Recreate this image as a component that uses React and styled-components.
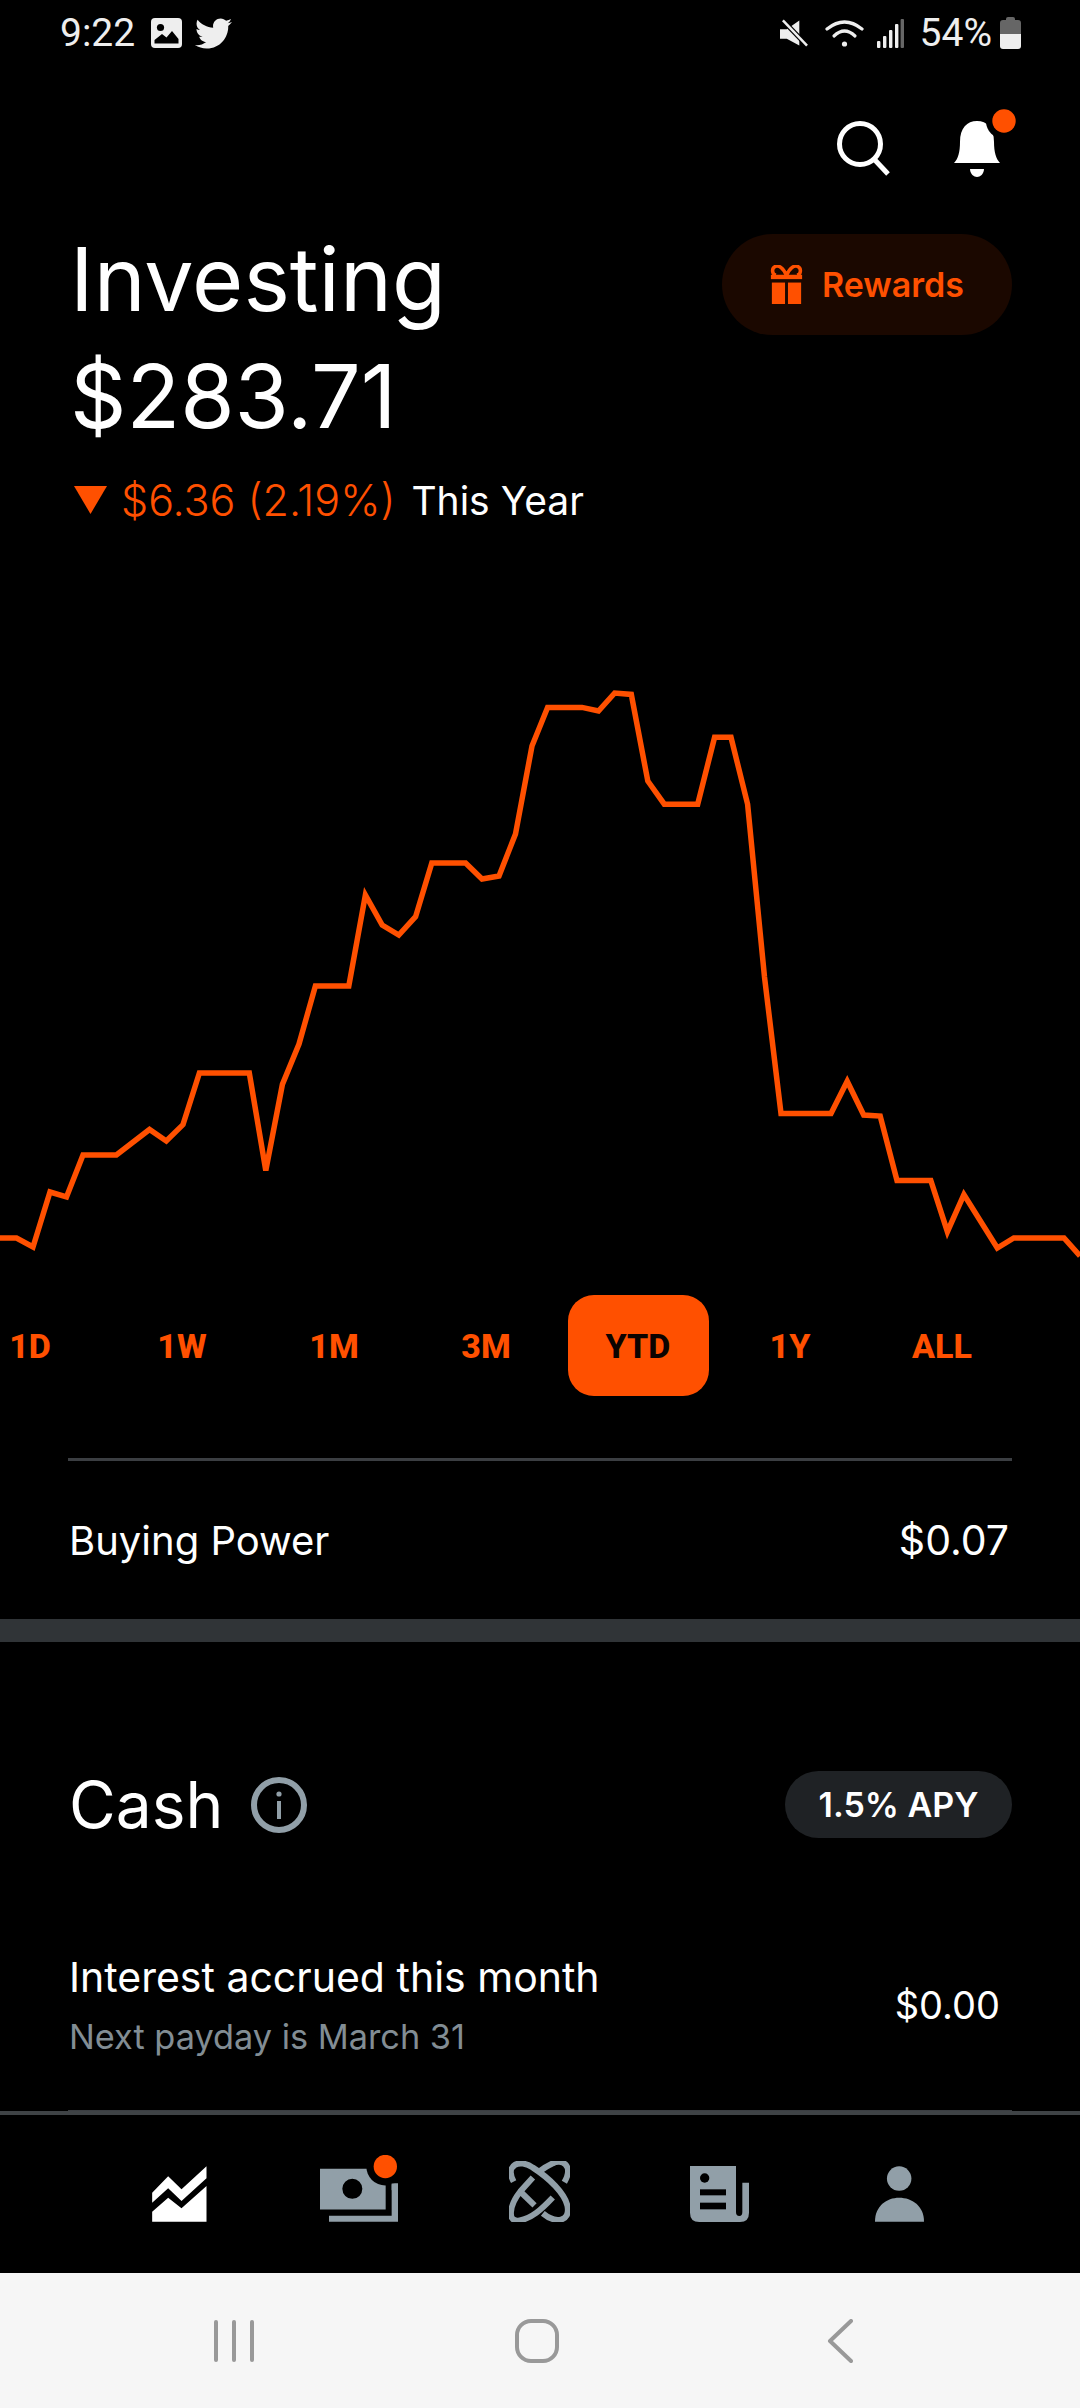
import React from 'react'
import styled, { createGlobalStyle } from 'styled-components'
import { FaTwitter } from 'react-icons/fa'

const ORANGE = '#ff5000'
const SLATE = '#919fa8'
const UI_FONT = '"Inter", "Liberation Sans", sans-serif'

const chartPoints = [
  [0, 1238], [16.5, 1238], [33, 1247], [50, 1192], [66.5, 1197], [83, 1155], [116.4, 1155],
  [149.5, 1129.5], [166.3, 1141], [183, 1124.6], [199.4, 1073], [249.3, 1073], [265.8, 1170.5],
  [282.4, 1084.4], [299, 1044], [315.4, 986], [348.8, 986], [365.4, 895], [382.2, 925],
  [398.8, 935], [415.6, 916.7], [431.8, 863], [465.6, 863], [482, 879], [499, 876], [515.5, 834],
  [532, 746], [547.6, 707.4], [582, 707.4], [598.5, 711], [614.7, 693], [631.3, 694.4],
  [647.8, 781], [664.3, 804.2], [697.7, 804.2], [714.6, 737.3], [731, 737.3], [747.6, 804.2],
  [764.5, 977], [781, 1113.4], [831, 1113.4], [847.2, 1081.3], [863.7, 1115], [880.2, 1116],
  [897, 1180.4], [930.8, 1180.4], [947.4, 1231.7], [963.9, 1194.6], [997.3, 1248], [1013.8, 1238],
  [1064, 1238], [1080, 1256],
]

const ranges = ['1D', '1W', '1M', '3M', 'YTD', '1Y', 'ALL']

const GlobalStyle = createGlobalStyle`
  html, body {
    margin: 0;
    padding: 0;
    background: #000;
  }
`

const Page = styled.div`
  width: 1080px;
  height: 2408px;
  display: flex;
  flex-direction: column;
  overflow: hidden;
  background: #000;
  color: #fff;
  font-family: ${UI_FONT};
`

const Main = styled.main`
  flex: 1;
  min-height: 0;
  overflow: hidden;
`

const StatusBar = styled.div`
  height: 66px;
  padding: 0 59px 0 60px;
  display: flex;
  align-items: center;
  justify-content: space-between;
  color: #eee;
  font-family: Roboto, sans-serif;
  font-size: 39px;
`

const StatusGroup = styled.div`
  display: flex;
  align-items: center;
`

const StatusItem = styled.span`
  display: flex;
  align-items: center;
  margin-right: ${p => p.$space || 0}px;
`

const Toolbar = styled.div`
  margin-top: 43px;
  padding-right: 63px;
  display: flex;
  justify-content: flex-end;
  align-items: flex-end;
  gap: 64px;
`

const SearchIcon = styled.svg`
  margin-bottom: 1px;
`

const Header = styled.header`
  margin-top: 44px;
  padding: 0 68px 0 70px;
  display: flex;
  justify-content: space-between;
  align-items: flex-start;
`

const Title = styled.h1`
  margin: 0;
  font-size: 88px;
  font-weight: 400;
  line-height: 117px;
`

const RewardsButton = styled.div`
  margin-top: 13px;
  width: 290px;
  height: 101px;
  border-radius: 51px;
  background: #1b0800;
  color: ${ORANGE};
  display: flex;
  align-items: center;
  justify-content: center;
  gap: 19px;
  font-size: 34px;
  font-weight: 600;
`

const Change = styled.div`
  margin-top: 20px;
  padding-left: 74px;
  display: flex;
  align-items: center;
  height: 50px;
  font-weight: 300;
`

const DownTriangle = styled.span`
  width: 33px;
  height: 28px;
  margin-right: 14px;
  background: ${ORANGE};
  clip-path: polygon(0 0, 100% 0, 50% 100%);
`

const ChangeValue = styled.span`
  color: ${ORANGE};
  margin-right: 16px;
  font-size: 43px;
`

const YearLabel = styled.span`
  font-size: 39px;
  font-weight: 400;
`

const ChartWrap = styled.div`
  margin-top: 155px;
  height: 580px;

  svg {
    display: block;
  }
`

const RangeTabs = styled.div`
  margin: 35px 0 0 -46px;
  display: flex;
  width: 1064px;
`

const RangeTab = styled.div`
  flex: 1;
  height: 101px;
  margin: 0 5.5px;
  border-radius: 26px;
  display: flex;
  align-items: center;
  justify-content: center;
  font-family: Roboto, sans-serif;
  font-size: 34px;
  font-weight: 800;
  background: ${p => (p.$active ? ORANGE : 'transparent')};
  color: ${p => (p.$active ? '#0c0300' : ORANGE)};
`

const Rule = styled.hr`
  margin: ${p => p.$top}px 68px 0;
  border: 0;
  height: ${p => p.$height}px;
  background: #3b3e42;
`

const BuyingRow = styled.div`
  height: 158px;
  padding: 0 71px 0 69px;
  display: flex;
  align-items: center;
  justify-content: space-between;
  font-size: 40px;
`

const BuyingValue = styled.span`
  font-size: 41px;
`

const Band = styled.div`
  height: 23px;
  background: #303437;
`

const CashHeader = styled.div`
  margin-top: 129px;
  height: 67px;
  padding: 0 68px 0 69px;
  display: flex;
  align-items: center;
  justify-content: space-between;
`

const CashTitle = styled.h2`
  margin: 0;
  display: flex;
  align-items: center;
  gap: 28px;
  font-size: 64px;
  font-weight: 400;
`

const ApyPill = styled.div`
  width: 227px;
  height: 67px;
  border-radius: 34px;
  background: #1f2225;
  display: flex;
  align-items: center;
  justify-content: center;
  font-size: 34px;
  font-weight: 600;
`

const InterestRow = styled.div`
  margin-top: 114px;
  padding: 0 80px 0 69px;
  display: flex;
  align-items: center;
  justify-content: space-between;
`

const InterestLabel = styled.div`
  font-size: 41px;
  line-height: 50px;
`

const InterestSub = styled.div`
  margin-top: 12px;
  color: #828d94;
  font-size: 34.3px;
  line-height: 46px;
`

const InterestValue = styled.div`
  margin-bottom: 2px;
  font-size: 38px;
`

const BottomNav = styled.nav`
  height: 162px;
  box-sizing: border-box;
  padding: 0 91px 51px 89px;
  border-top: 4px solid #3f4346;
  display: grid;
  grid-template-columns: repeat(5, 1fr);
  align-items: end;
  justify-items: center;
`

const SystemNav = styled.div`
  height: 135px;
  padding: 0 89px 0 82px;
  background: #f6f6f6;
  display: grid;
  grid-template-columns: repeat(3, 1fr);
  align-items: center;
  justify-items: center;
`

const MuteGlyph = () => (
  <svg width="28" height="28" viewBox="0 0 29 28">
    <path d="M0 10 H7 L20 1 V27 L7 20 H0Z" fill="#eee" />
    <path d="M2 0 L28 27" stroke="#000" strokeWidth="5" />
    <path d="M3 1 L28 27" stroke="#eee" strokeWidth="2.6" />
  </svg>
)

const WifiGlyph = () => (
  <svg width="39" height="28" viewBox="0 0 39 28" fill="none" stroke="#eee" strokeWidth="3.2" strokeLinecap="round">
    <path d="M2 10 Q19.5 -4 37 10" />
    <path d="M9 17 Q19.5 7 30 17" />
    <circle cx="19.5" cy="25" r="2.6" fill="#eee" stroke="none" />
  </svg>
)

const SignalGlyph = () => (
  <svg width="27" height="29" viewBox="0 0 27 29">
    <rect x="0" y="22" width="3.4" height="7" rx="1" fill="#eee" />
    <rect x="6" y="17" width="3.4" height="12" rx="1" fill="#eee" />
    <rect x="12" y="11" width="3.4" height="18" rx="1" fill="#eee" />
    <rect x="18" y="5" width="3.4" height="24" rx="1" fill="#eee" />
    <rect x="23.6" y="0" width="3.4" height="29" rx="1" fill="#666" />
  </svg>
)

const BatteryGlyph = () => (
  <svg width="21" height="32" viewBox="0 0 21 32">
    <path d="M6 2 Q6 0 8 0 H13 Q15 0 15 2 V3 H18 Q21 3 21 6 V17 H0 V6 Q0 3 3 3 H6Z" fill="#666" />
    <path d="M0 17 H21 V29 Q21 32 18 32 H3 Q0 32 0 29Z" fill="#eee" />
  </svg>
)

const PictureGlyph = () => (
  <svg width="31" height="31" viewBox="0 0 31 31">
    <rect width="31" height="30" rx="4" fill="#eee" />
    <circle cx="9.5" cy="9.5" r="3.6" fill="#000" />
    <path d="M3.5 25.5 V22 L11 16 L15.5 19.5 L21 13 L27.5 21 V25.5 Z" fill="#000" />
  </svg>
)

const GiftIcon = () => (
  <svg width="33" height="39" viewBox="0 0 32 40">
    <path d="M16 11 C13 3 8 0 4.5 1.5 C0.5 3.5 1 9 5 10.5 M16 11 C19 3 24 0 27.5 1.5 C31.5 3.5 31 9 27 10.5" fill="none" stroke={ORANGE} strokeWidth="3.6" />
    <rect x="0" y="10" width="32" height="4.5" fill={ORANGE} />
    <rect x="1" y="18" width="13.5" height="22" fill={ORANGE} />
    <rect x="17.5" y="18" width="13.5" height="22" fill={ORANGE} />
  </svg>
)

const BellIcon = () => (
  <svg width="63" height="68" viewBox="0 0 63 68">
    <path d="M0 54 C4 50 6 43 6 33 C6 19 13 12 23 12 C33 12 40 19 40 33 C40 43 42 50 46 54 Z" fill="#fff" />
    <path d="M16 60 H30 C30 65 26 68 23 68 C20 68 16 65 16 60Z" fill="#fff" />
    <circle cx="50" cy="12" r="18" fill="#000" />
    <circle cx="50" cy="12" r="11.7" fill={ORANGE} />
  </svg>
)

const InfoIcon = () => (
  <svg width="56" height="56" viewBox="0 0 56 56">
    <circle cx="28" cy="28" r="25" fill="none" stroke={SLATE} strokeWidth="6" />
    <circle cx="28" cy="17" r="2.6" fill={SLATE} />
    <rect x="26" y="24" width="4" height="18" fill={SLATE} />
  </svg>
)

const ChartTabIcon = () => (
  <svg width="55" height="56" viewBox="0 0 164 168" fill="#fff">
    <path d="M0 80 L48 31 L88 70 L163 1 V37 L88 105 L48 67 L0 110Z" />
    <path d="M0 137 L48 95 L88 127 L163 60 V167 H0Z" />
  </svg>
)

const CashTabIcon = () => (
  <svg width="78" height="67" viewBox="0 0 234 200">
    <path fillRule="evenodd" d="M0 41 H197 V163 H0Z M97 71 A30 30 0 1 0 97.01 131 A30 30 0 1 0 97 71Z" fill={SLATE} />
    <path d="M27 182 H215 V85 H234 V200 H27Z" fill={SLATE} />
    <circle cx="196" cy="34" r="57" fill="#000" />
    <rect x="215" y="85" width="19" height="20" fill={SLATE} />
    <circle cx="196" cy="34" r="35" fill={ORANGE} />
  </svg>
)

const AtomTabIcon = () => (
  <svg width="61" height="61" viewBox="28 38 184 184" fill="none" stroke={SLATE} strokeWidth="18">
    <path d="M42 100 C15 50 60 30 100 58 C150 90 195 135 204 172 C215 225 165 225 130 196" />
    <path d="M195 102 C225 50 185 30 160 45 C145 52 132 60 122 68" />
    <path d="M100 88 L62 130 C30 170 20 225 60 217 C95 212 125 185 160 148" />
    <path d="M62 130 L105 172" />
  </svg>
)

const NewsTabIcon = () => (
  <svg width="59" height="56" viewBox="0 0 177 168">
    <path d="M0 0 H138 V138 Q138 150 148 150 Q157 150 157 138 V50 H177 V140 Q177 168 150 168 H28 Q0 168 0 140Z" fill={SLATE} />
    <circle cx="44" cy="36" r="14" fill="#000" />
    <rect x="30" y="70" width="78" height="18" fill="#000" />
    <rect x="30" y="110" width="78" height="20" fill="#000" />
  </svg>
)

const PersonTabIcon = () => (
  <svg width="49" height="56" viewBox="0 0 148 167" fill={SLATE}>
    <circle cx="73" cy="37" r="37" />
    <path d="M0 167 C0 120 35 95 73 95 C112 95 148 120 148 167Z" />
  </svg>
)

const RecentsIcon = () => (
  <svg width="40" height="42" viewBox="0 0 40 42" fill="#999">
    <rect x="0" width="4" height="42" rx="2" />
    <rect x="18" width="4" height="42" rx="2" />
    <rect x="36" width="4" height="42" rx="2" />
  </svg>
)

const HomeIcon = () => (
  <svg width="44" height="44" viewBox="0 0 44 44">
    <rect x="2" y="2" width="40" height="40" rx="14" fill="none" stroke="#999" strokeWidth="4" />
  </svg>
)

const BackIcon = () => (
  <svg width="26" height="44" viewBox="0 0 26 44">
    <path d="M24 2 L3 22 L24 42" fill="none" stroke="#999" strokeWidth="4" strokeLinecap="round" strokeLinejoin="round" />
  </svg>
)

export default function App() {
  const line = chartPoints.map(p => p.join(',')).join(' ')

  return (
    <>
      <GlobalStyle />
      <Page>
        <Main>
          <StatusBar>
            <StatusGroup>
              <StatusItem $space={16}>9:22</StatusItem>
              <StatusItem $space={13}><PictureGlyph /></StatusItem>
              <FaTwitter size={37} />
            </StatusGroup>
            <StatusGroup>
              <StatusItem $space={17}><MuteGlyph /></StatusItem>
              <StatusItem $space={13}><WifiGlyph /></StatusItem>
              <StatusItem $space={16}><SignalGlyph /></StatusItem>
              <StatusItem $space={8}>54%</StatusItem>
              <BatteryGlyph />
            </StatusGroup>
          </StatusBar>

          <Toolbar>
            <SearchIcon width="53" height="55" viewBox="0 0 53 55" fill="none" stroke="#fff" strokeWidth="5">
              <circle cx="23" cy="23" r="20.5" />
              <path d="M37 38 L51 53" />
            </SearchIcon>
            <BellIcon />
          </Toolbar>

          <Header>
            <Title>
              Investing
              <br />
              $283.71
            </Title>
            <RewardsButton>
              <GiftIcon />
              Rewards
            </RewardsButton>
          </Header>

          <Change>
            <DownTriangle />
            <ChangeValue>$6.36 (2.19%)</ChangeValue>
            <YearLabel>This Year</YearLabel>
          </Change>

          <ChartWrap>
            <svg width="1080" height="580" viewBox="0 680 1080 580">
              <polyline points={line} fill="none" stroke={ORANGE} strokeWidth="5.5" strokeLinejoin="miter" />
            </svg>
          </ChartWrap>

          <RangeTabs>
            {ranges.map(r => (
              <RangeTab key={r} $active={r === 'YTD'}>{r}</RangeTab>
            ))}
          </RangeTabs>

          <Rule $top={62} $height={3} />
          <BuyingRow>
            <span>Buying Power</span>
            <BuyingValue>$0.07</BuyingValue>
          </BuyingRow>
          <Band />

          <CashHeader>
            <CashTitle>
              Cash
              <InfoIcon />
            </CashTitle>
            <ApyPill>1.5% APY</ApyPill>
          </CashHeader>

          <InterestRow>
            <div>
              <InterestLabel>Interest accrued this month</InterestLabel>
              <InterestSub>Next payday is March 31</InterestSub>
            </div>
            <InterestValue>$0.00</InterestValue>
          </InterestRow>
          <Rule $top={50} $height={2} />
        </Main>

        <BottomNav>
          <ChartTabIcon />
          <CashTabIcon />
          <AtomTabIcon />
          <NewsTabIcon />
          <PersonTabIcon />
        </BottomNav>

        <SystemNav>
          <RecentsIcon />
          <HomeIcon />
          <BackIcon />
        </SystemNav>
      </Page>
    </>
  )
}
